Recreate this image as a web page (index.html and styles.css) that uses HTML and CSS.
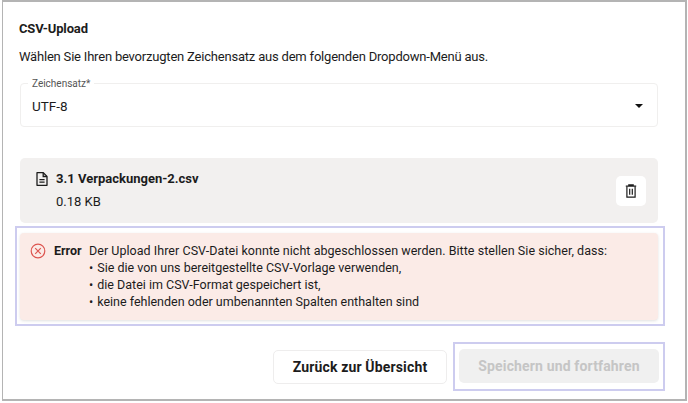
FILE: index.html
```html
<!DOCTYPE html>
<html lang="de">
<head>
  <meta charset="UTF-8">
  <meta name="viewport" content="width=device-width, initial-scale=1.0">
  <title>CSV-Upload</title>
  <link rel="stylesheet" href="styles.css">
</head>
<body>
  <div class="frame">
    <h1 class="title">CSV-Upload</h1>
    <p class="intro">Wählen Sie Ihren bevorzugten Zeichensatz aus dem folgenden Dropdown-Menü aus.</p>

    <div class="select">
      <span class="select-label">Zeichensatz*</span>
      <span class="select-value">UTF-8</span>
      <span class="select-arrow"></span>
    </div>

    <div class="file">
      <div class="file-info">
        <div class="file-name">
          <svg class="file-icon" width="16" height="16" viewBox="0 0 16 16" fill="none" stroke="#1c1c1c" stroke-width="1.3">
            <path d="M3 1.7h6.3L13 5.4v8.9H3z" stroke-linejoin="round"/>
            <path d="M9.2 1.7v3.8H13"/>
            <path d="M5.4 8.6h5.2M5.4 11.2h5.2"/>
          </svg>
          <span>3.1 Verpackungen-2.csv</span>
        </div>
        <div class="file-size">0.18 KB</div>
      </div>
      <button class="delete">
        <svg width="12" height="14" viewBox="0 0 12 14" fill="none" stroke="#1c1c1c" stroke-width="1.2">
          <path d="M0.8 2.2h10.4M3.8 2V0.8h4.4V2"/>
          <path d="M1.9 2.4v10.8h8.2V2.4"/>
          <path d="M4.7 4.8v6M7.3 4.8v6"/>
        </svg>
      </button>
    </div>

    <div class="highlight highlight-error">
      <div class="error">
        <svg class="error-icon" width="16" height="16" viewBox="0 0 16 16" fill="none" stroke="#dd5550" stroke-width="1.2">
          <circle cx="8" cy="8" r="6.8"/>
          <path d="M5.2 5.2l5.6 5.6M10.8 5.2l-5.6 5.6"/>
        </svg>
        <strong class="error-title">Error</strong>
        <div class="error-text">
          <div class="error-lead">Der Upload Ihrer CSV-Datei konnte nicht abgeschlossen werden. Bitte stellen Sie sicher, dass:</div>
          <ul class="error-list">
            <li>Sie die von uns bereitgestellte CSV-Vorlage verwenden,</li>
            <li>die Datei im CSV-Format gespeichert ist,</li>
            <li>keine fehlenden oder umbenannten Spalten enthalten sind</li>
          </ul>
        </div>
      </div>
    </div>

    <div class="actions">
      <button class="btn btn-back">Zurück zur Übersicht</button>
      <div class="highlight highlight-save">
        <button class="btn btn-save" disabled>Speichern und fortfahren</button>
      </div>
    </div>
  </div>
</body>
</html>
```

FILE: styles.css
```css
html, body {
  margin: 0;
  height: 100%;
  background: #fff;
}

body {
  font-family: Roboto, sans-serif;
  color: #1c1c1c;
}

.frame {
  box-sizing: border-box;
  width: 685px;
  height: 401px;
  margin-left: 2px;
  padding: 19px 27px 0 17px;
  border: 1px solid #b4b4b4;
  border-top-width: 2px;
  border-bottom-width: 2px;
  border-right-width: 2px;
}

.title {
  margin: 0 0 0 -1px;
  font-size: 13px;
  line-height: 16px;
  font-weight: 700;
  letter-spacing: -0.15px;
}

.intro {
  margin: 11px 0 0 -1px;
  font-size: 13px;
  line-height: 18px;
  letter-spacing: -0.2px;
}

.select {
  position: relative;
  display: flex;
  align-items: center;
  justify-content: space-between;
  box-sizing: border-box;
  height: 44px;
  margin-top: 17px;
  padding: 2px 14px 0 11px;
  border: 1px solid #f0efee;
  border-radius: 4px;
}

.select-label {
  position: absolute;
  top: -6px;
  left: 7px;
  padding: 0 4px;
  background: #fff;
  font-size: 10px;
  line-height: 11px;
  color: #555;
}

.select-value {
  font-size: 13.5px;
}

.select-arrow {
  width: 0;
  height: 0;
  border-left: 4px solid transparent;
  border-right: 4px solid transparent;
  border-top: 4px solid #111;
}

.file {
  display: flex;
  align-items: center;
  justify-content: space-between;
  box-sizing: border-box;
  height: 65px;
  margin-top: 31px;
  padding: 0 12px 0 14px;
  background: #f2f0ef;
  border-radius: 5px;
}

.file-name {
  display: flex;
  align-items: center;
  gap: 6px;
  font-size: 13px;
  line-height: 18px;
  font-weight: 700;
}

.file-size {
  margin: 5px 0 0 22px;
  font-size: 13px;
  line-height: 18px;
}

.delete {
  display: flex;
  align-items: center;
  justify-content: center;
  width: 30px;
  height: 30px;
  padding: 0;
  border: none;
  border-radius: 5px;
  background: #fff;
}

.highlight {
  box-sizing: border-box;
  border: 2px solid #cdccef;
}

.highlight-error {
  margin: 3px -7px 0 -5px;
  padding: 5px 5px 4px 3px;
}

.error {
  display: flex;
  align-items: flex-start;
  box-sizing: border-box;
  height: 87px;
  padding: 9px 12px;
  background: #fbebe7;
  border-radius: 4px;
  box-shadow: 0 1px 3px rgba(0, 0, 0, 0.12);
  font-size: 12.5px;
  line-height: 17px;
}

.error-icon {
  flex: none;
  margin: 1px 8px 0 -2px;
}

.error-title {
  flex: none;
  width: 35px;
  font-weight: 700;
}

.error-lead {
  letter-spacing: 0.04px;
}

.error-list {
  margin: 0;
  padding: 0;
  list-style: none;
}

.error-list li::before {
  content: "•";
  margin: 0 4px 0 0;
}

.actions {
  display: flex;
  justify-content: flex-end;
  align-items: center;
  gap: 6px;
  margin: 16px -7px 0 0;
}

.btn {
  box-sizing: border-box;
  height: 34px;
  border-radius: 5px;
  font-family: inherit;
  font-size: 14px;
  font-weight: 700;
  letter-spacing: 0.15px;
}

.btn-back {
  width: 174px;
  background: #fff;
  border: 1px solid #eeeded;
  color: #1c1c1c;
}

.highlight-save {
  width: 212px;
  height: 49px;
  padding: 5px 4px 6px 4px;
}

.btn-save {
  width: 100%;
  border: none;
  background: #f0f0f0;
  color: #c5c5c5;
}
```
